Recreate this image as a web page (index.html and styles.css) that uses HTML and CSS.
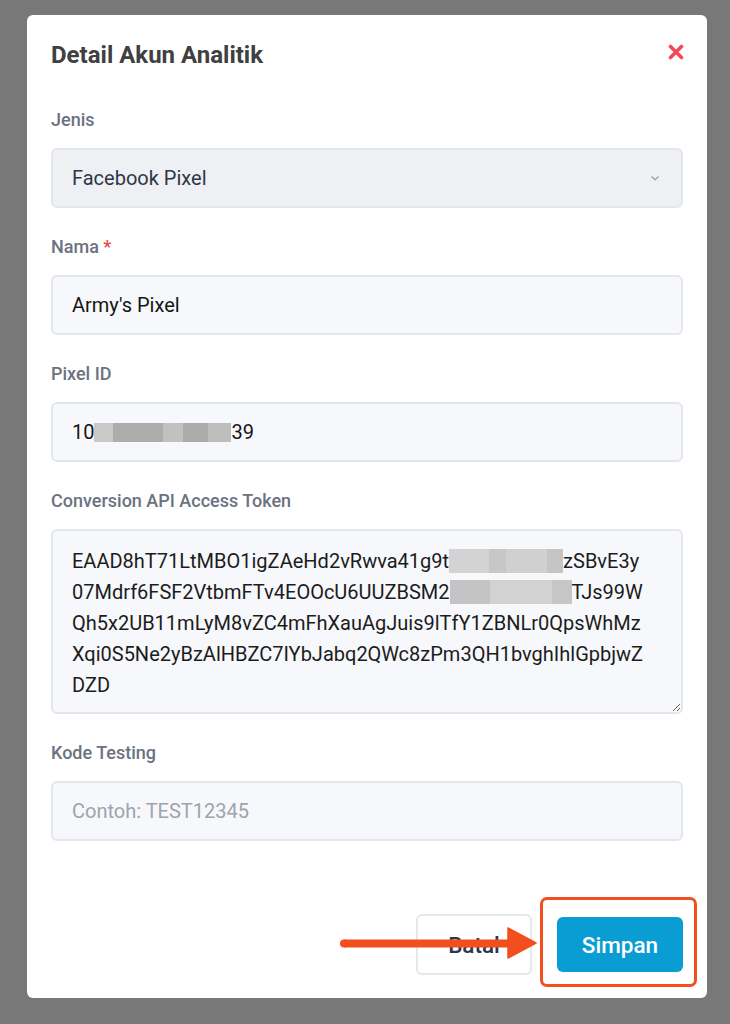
FILE: index.html
```html
<!DOCTYPE html>
<html lang="id">
<head>
    <meta charset="UTF-8">
    <meta name="viewport" content="width=device-width, initial-scale=1.0">
    <title>Detail Akun Analitik</title>
    <link rel="stylesheet" href="styles.css">
</head>
<body>

    <div class="modal">
        <div class="modal-header">
            <h2 class="modal-title">Detail Akun Analitik</h2>
            <button class="close-btn" aria-label="Tutup">
                <svg width="16" height="16" viewBox="0 0 16 16">
                    <path d="M2.5 2.5 L13.5 13.5 M13.5 2.5 L2.5 13.5" stroke="#f2485c" stroke-width="3.6" stroke-linecap="round"/>
                </svg>
            </button>
        </div>

        <div class="modal-body">
            <div class="form-group">
                <label class="label">Jenis</label>
                <div class="field select">
                    <span>Facebook Pixel</span>
                    <svg width="12" height="8" viewBox="0 0 12 8">
                        <path d="M2.5 2.5 L6 5.8 L9.5 2.5" fill="none" stroke="#a3a7ae" stroke-width="1.5"/>
                    </svg>
                </div>
            </div>

            <div class="form-group">
                <label class="label">Nama <span class="required">*</span></label>
                <input class="field" type="text" value="Army's Pixel">
            </div>

            <div class="form-group">
                <label class="label">Pixel ID</label>
                <div class="field">
                    <span>10</span><span class="blur"><i style="width:19px;background:#c9c9c9"></i><i style="width:50px;background:#adadad"></i><i style="width:20px;background:#c1c1c1"></i><i style="width:25px;background:#acacac"></i><i style="width:23px;background:#bebebe"></i></span><span>39</span>
                </div>
            </div>

            <div class="form-group">
                <label class="label">Conversion API Access Token</label>
                <div class="field textarea">
                    <div>EAAD8hT71LtMBO1igZAeHd2vRwva41g9t<span class="blur tall"><i style="width:40px;background:#d3d3d3"></i><i style="width:17px;background:#c7c7c7"></i><i style="width:41px;background:#d0d0d0"></i><i style="width:16px;background:#c5c5c5"></i></span>zSBvE3y</div>
                    <div>07Mdrf6FSF2VtbmFTv4EOOcU6UUZBSM2<span class="blur tall"><i style="width:40px;background:#c4c4c4"></i><i style="width:62px;background:#d2d2d2"></i><i style="width:20px;background:#c6c6c6"></i></span>TJs99W</div>
                    <div>Qh5x2UB11mLyM8vZC4mFhXauAgJuis9lTfY1ZBNLr0QpsWhMz</div>
                    <div>Xqi0S5Ne2yBzAlHBZC7IYbJabq2QWc8zPm3QH1bvghIhlGpbjwZ</div>
                    <div>DZD</div>
                </div>
            </div>

            <div class="form-group">
                <label class="label">Kode Testing</label>
                <input class="field" type="text" placeholder="Contoh: TEST12345">
            </div>
        </div>

        <div class="modal-footer">
            <button class="btn btn-cancel">Batal</button>
            <div class="highlight">
                <button class="btn btn-save">Simpan</button>
            </div>
            <svg class="pointer-arrow" width="200" height="34" viewBox="0 0 200 34">
                <path d="M4 13.5 L172 13.5 L172 21.5 L4 21.5 Z" fill="#f24e1e"/>
                <circle cx="4" cy="17.5" r="4" fill="#f24e1e"/>
                <path d="M168 2 L196 17 L168 32 Z" fill="#f24e1e" stroke="#f24e1e" stroke-width="1.5" stroke-linejoin="round"/>
            </svg>
        </div>
    </div>

</body>
</html>
```

FILE: styles.css
```css
body {
    font-family: 'Roboto', 'Liberation Sans', sans-serif;
    background-color: #787878;
    margin: 0;
    padding: 15px 23px 26px 27px;
}

.modal {
    position: relative;
    width: 680px;
    height: 983px;
    box-sizing: border-box;
    background-color: #ffffff;
    border-radius: 6px;
    display: flex;
    flex-direction: column;
}

.modal-header {
    display: flex;
    align-items: center;
    justify-content: space-between;
    padding: 26px 19px 0 24px;
}

.modal-title {
    margin: 0;
    font-size: 24px;
    line-height: 28px;
    font-weight: 700;
    color: #404040;
}

.close-btn {
    border: none;
    background: none;
    padding: 0;
    width: 24px;
    height: 24px;
    display: flex;
    align-items: center;
    justify-content: center;
    margin-top: -6px;
}

.modal-body {
    padding: 41px 24px 0;
}

.form-group {
    display: flex;
    flex-direction: column;
    margin-bottom: 29px;
}

.form-group:last-child {
    margin-bottom: 0;
}

.label {
    font-size: 18px;
    line-height: 20px;
    font-weight: 500;
    color: #6b7280;
    margin-bottom: 18px;
}

.required {
    color: #ef4444;
}

.field {
    box-sizing: border-box;
    width: 100%;
    height: 60px;
    margin: 0;
    padding: 0 19px;
    border: 2px solid #e3e6eb;
    border-radius: 6px;
    background-color: #f7f8fb;
    font-family: inherit;
    font-size: 20px;
    color: #151515;
    display: flex;
    align-items: center;
    outline: none;
}

.field::placeholder {
    color: #9ea4ad;
}

.select {
    justify-content: space-between;
    background-color: #eef0f3;
    color: #2d3748;
    padding-right: 20px;
}

.blur {
    display: inline-flex;
    height: 19px;
    vertical-align: middle;
}

.blur i {
    display: block;
    height: 100%;
}

.blur.tall {
    height: 24px;
    vertical-align: -5px;
}

.textarea {
    display: block;
    height: 185px;
    padding: 15px 19px 11px;
    line-height: 31px;
    color: #1c1c1c;
    resize: vertical;
    overflow: auto;
}

.modal-footer {
    position: relative;
    margin-top: auto;
    display: flex;
    justify-content: flex-end;
    align-items: center;
    gap: 25px;
    padding: 0 24px 23px;
}

.btn {
    font-family: inherit;
    font-size: 22.5px;
    font-weight: 500;
    border-radius: 6px;
    cursor: pointer;
}

.btn-cancel {
    width: 116px;
    height: 61px;
    background-color: #ffffff;
    border: 2px solid #e4e7ec;
    color: #2d3748;
}

.btn-save {
    width: 126px;
    height: 55px;
    background-color: #0a9dd3;
    border: none;
    color: #ffffff;
}

.highlight {
    position: relative;
}

.highlight::after {
    content: "";
    position: absolute;
    top: -20px;
    left: -17px;
    right: -14px;
    bottom: -15px;
    border: 3px solid #f24e1e;
    border-radius: 7px;
}

.pointer-arrow {
    position: absolute;
    left: 313px;
    top: 12px;
}
```
